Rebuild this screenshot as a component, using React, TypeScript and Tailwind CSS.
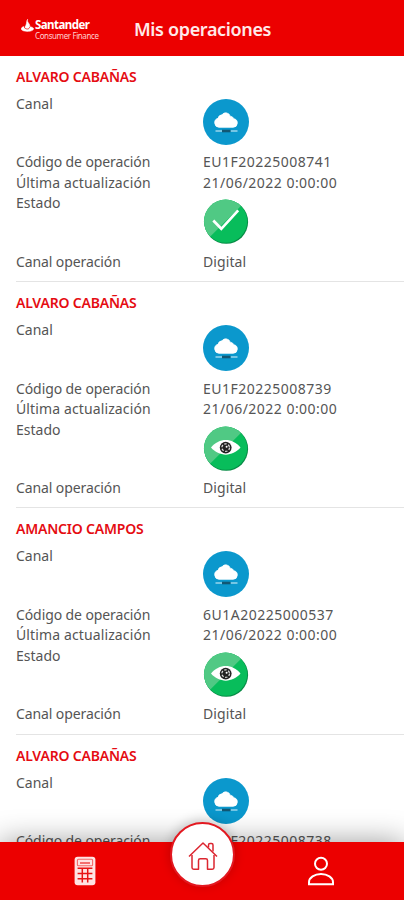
import React from "react";

type Status = "approved" | "review";

interface Operation {
    name: string;
    code: string;
    updatedAt: string;
    status: Status;
    channel: string;
}

const operations: Operation[] = [
    {
        name: "ALVARO CABAÑAS",
        code: "EU1F20225008741",
        updatedAt: "21/06/2022 0:00:00",
        status: "approved",
        channel: "Digital",
    },
    {
        name: "ALVARO CABAÑAS",
        code: "EU1F20225008739",
        updatedAt: "21/06/2022 0:00:00",
        status: "review",
        channel: "Digital",
    },
    {
        name: "AMANCIO CAMPOS",
        code: "6U1A20225000537",
        updatedAt: "21/06/2022 0:00:00",
        status: "review",
        channel: "Digital",
    },
    {
        name: "ALVARO CABAÑAS",
        code: "EU1F20225008738",
        updatedAt: "21/06/2022 0:00:00",
        status: "review",
        channel: "Digital",
    },
];

function CloudIcon() {
    return (
        <svg width="46" height="46" viewBox="0 0 46 46">
            <circle cx="23" cy="23" r="23" fill="#0b98cd" />
            <path
                d="M16 28.3a4.6 4.6 0 0 1-1-9 4.6 4.6 0 0 1 4-3.500 4.600 4.600 0 0 1 8.200 1.400 4.400 4.400 0 0 1 3.700 2.600 4.300 4.300 0 0 1-.9 8.500z"
                fill="#fff"
                stroke="#fff"
                strokeWidth=".8"
            />
            <path d="M12.500 32h6.500M27.500 32h7" stroke="#9bd5ec" strokeWidth="1.600" />
            <path d="M19 32h8.500" stroke="#125773" strokeWidth="2.600" />
        </svg>
    );
}

function StatusIcon({ status }: { status: Status }) {
    return (
        <svg width="46" height="46" viewBox="0 0 46 46">
            <circle cx="23.200" cy="22.900" r="21.900" fill="#078b45" />
            <circle cx="22.600" cy="22.200" r="21.600" fill="#08bd5b" />
            <path d="M7.300 37.500A21.600 21.600 0 0 1 37.900 6.900z" fill="#50c984" />
            {status === "approved" ? (
                <path
                    d="M10.300 21.500l8 8.300L35.200 11.400"
                    fill="none"
                    stroke="#fff"
                    strokeWidth="2.700"
                />
            ) : (
                <>
                    <path
                        d="M8 21.600C16 11.600 29.500 11.600 37.500 21.600 29.500 31 16 31 8 21.600z"
                        fill="#fff"
                    />
                    <circle cx="22.700" cy="21.600" r="5.900" fill="#222" />
                    <circle
                        cx="22.700"
                        cy="21.600"
                        r="3.800"
                        fill="none"
                        stroke="#ddd"
                        strokeWidth="1.300"
                        strokeDasharray="2.400 1.600"
                    />
                    <circle cx="23.600" cy="20.700" r="1" fill="#fff" />
                </>
            )}
        </svg>
    );
}

function Logo() {
    return (
        <div className="ml-[21px] flex w-[80px] items-start text-white">
            <svg width="13" height="13" viewBox="0 0 13 13" className="mt-px shrink-0">
                <path
                    d="M6.700.2c-.6 1.100-.3 2 .5 3.300l1.300 2c.4.800.4 1.500.1 2.200 2.300.2 4 1 4 2.100 0 1.500-2.700 2.600-6.200 2.600S.2 11.300.2 9.800c0-1 1.100-1.800 2.800-2.200-.1 1 .2 1.500.8 2.300-.1-1.500.1-2.300 1-3.500C5.900 4.200 5.200 1.800 6.700.2z"
                    fill="#fff"
                    stroke="#fff"
                    strokeWidth=".5"
                />
                <path
                    d="M3.200 7.300c.2 1.700 1.400 2.700 3.100 2.700 1.500 0 2.300-.8 2.300-2"
                    fill="none"
                    stroke="#ec0000"
                    strokeWidth=".7"
                />
            </svg>
            <div className="ml-px pt-px whitespace-nowrap">
                <div className="text-[11.500px] leading-[12px] font-bold tracking-[-0.550px]">
                    Santander
                </div>
                <div className="text-[8px] leading-[10px] tracking-[-0.4px] text-[#ffd0d0]">
                    Consumer Finance
                </div>
            </div>
        </div>
    );
}

function OperationCard({ operation }: { operation: Operation }) {
    return (
        <li className="ml-4 h-[226.300px] shrink-0 border-b border-[#e4e4e4] pt-[11px] text-[14px] leading-5 text-[#555]">
            <h2 className="mb-[7px] font-semibold tracking-[-0.2px] text-[#e50c12]">
                {operation.name}
            </h2>
            <dl className="grid grid-cols-[187px_1fr] grid-rows-[58.500px_20.500px_20.500px_58.500px_20px]">
                <dt>Canal</dt>
                <dd className="pt-[5px]">
                    <CloudIcon />
                </dd>
                <dt className="tracking-[-0.1px]">Código de operación</dt>
                <dd className="tracking-[0.500px]">{operation.code}</dd>
                <dt className="tracking-[0.120px]">Última actualización</dt>
                <dd className="tracking-[0.480px]">{operation.updatedAt}</dd>
                <dt>Estado</dt>
                <dd className="pt-[6px]">
                    <StatusIcon status={operation.status} />
                </dd>
                <dt className="tracking-[-0.1px]">Canal operación</dt>
                <dd className="tracking-[0.1px]">{operation.channel}</dd>
            </dl>
        </li>
    );
}

function BottomNav() {
    return (
        <nav className="absolute inset-x-0 bottom-0 h-[58.500px] bg-[#ec0000] shadow-[0_0_30px_rgba(0,0,0,0.4)]">
            <div className="flex h-full items-center justify-between pr-[69px] pl-[74px]">
                <button aria-label="Calculadora">
                    <svg width="22" height="30" viewBox="0 0 22 30">
                        <rect x=".6" y=".8" width="20.800" height="28.400" rx="3" fill="#ffe3e3" />
                        <rect x="3.400" y="3.200" width="15.200" height="6.600" rx="1" fill="none" stroke="#f46a6a" strokeWidth="1.100" />
                        <path d="M6 7h10" stroke="#ee3030" strokeWidth="1.300" />
                        <path
                            d="M3.600 12.300h14.800M3.600 17.500h14.800M3.600 22.700h14.800M8.300 11.500v15M13.700 11.500v15"
                            stroke="#e81414"
                            strokeWidth="1.500"
                        />
                    </svg>
                </button>
                <button aria-label="Perfil">
                    <svg width="28" height="30" viewBox="0 0 28 30" fill="none" stroke="#fff" strokeWidth="2">
                        <circle cx="14" cy="7.700" r="6" />
                        <path d="M2 28.200v-2C2 21.500 7.500 18 14 18s12 3.500 12 8.200v2z" />
                    </svg>
                </button>
            </div>
            <button
                aria-label="Inicio"
                className="absolute -top-[19.500px] left-[170px] flex size-[65px] items-center justify-center rounded-full border-2 border-[#e31820] bg-white pt-[3px] shadow-[0_-2px_12px_rgba(0,0,0,0.2)]"
            >
                <svg width="30" height="30" viewBox="0 0 30 30" fill="none" stroke="#dc2630" strokeWidth="1.500" strokeLinejoin="round">
                    <path d="M1 15.500L15 2l14 13.500" />
                    <path d="M4 14v12.500c0 1 .7 1.700 1.700 1.700h4.800v-8.700c0-1 .7-1.700 1.700-1.700h5.600c1 0 1.700.7 1.700 1.700v8.700h4.800c1 0 1.700-.7 1.700-1.700V14" />
                    <path d="M20.500 6.500V4c0-1 .6-1.500 1.500-1.500h1.500c.9 0 1.500.5 1.500 1.500v6.500" />
                </svg>
            </button>
        </nav>
    );
}

export default function App() {
    return (
        <div className="relative flex h-[900px] w-[404px] flex-col overflow-hidden bg-white font-['Noto_Sans','Open_Sans',sans-serif]">
            <header className="flex h-[55.500px] shrink-0 items-center bg-[#ec0000] pt-[3px]">
                <Logo />
                <h1 className="ml-[33px] text-[18px] leading-6 font-semibold tracking-[-0.350px] text-[#ffe9e9]">
                    Mis operaciones
                </h1>
            </header>
            <ul className="flex min-h-0 flex-1 flex-col overflow-hidden pt-[0.400px]">
                {operations.map((operation) => (
                    <OperationCard key={operation.code} operation={operation} />
                ))}
            </ul>
            <BottomNav />
        </div>
    );
}
